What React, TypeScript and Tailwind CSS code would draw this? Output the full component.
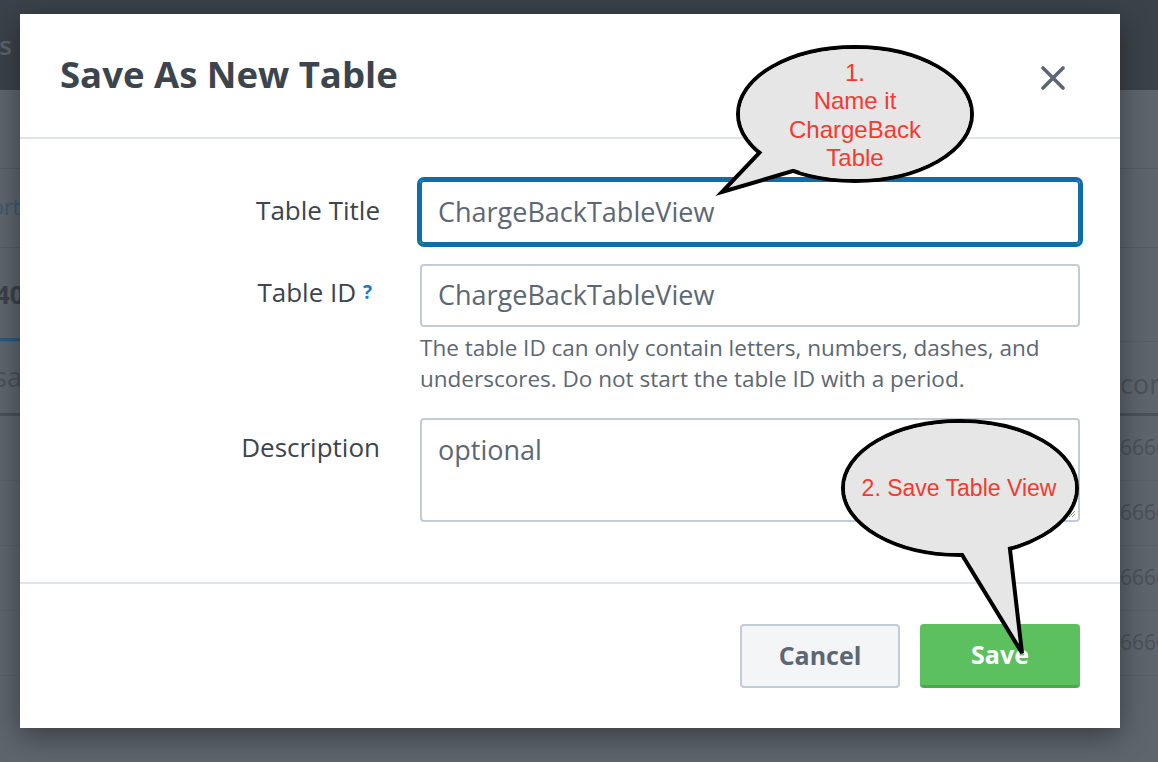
import React from 'react';

const ui = { fontFamily: '"Open Sans", Lato, sans-serif' };
const note = { fontFamily: '"Liberation Sans", Arial, sans-serif' };

const BgRow: React.FC<{ h: string; border: string; left?: React.ReactNode; right?: React.ReactNode }> = ({ h, border, left, right }) => (
  <div className={`flex items-center ${h} ${border}`}>
    <div className="w-[20px] overflow-hidden flex justify-end whitespace-nowrap">{left}</div>
    <div className="flex-1" />
    <div className="w-[38px] overflow-hidden whitespace-nowrap">{right}</div>
  </div>
);

const Bubbles: React.FC = () => (
  <svg className="absolute inset-0 pointer-events-none" width="1158" height="762" viewBox="0 0 1158 762">
    {/* bubble 1 */}
    <ellipse cx="855" cy="114" rx="117" ry="67" fill="#e6e6e6" stroke="#000" strokeWidth="4" />
    <polygon points="780,131 722,192 830,160" fill="#e6e6e6" stroke="#000" strokeWidth="4" strokeLinejoin="miter" />
    <ellipse cx="855" cy="114" rx="115" ry="65" fill="#e6e6e6" />
    <g fill="#f23b30" fontSize="24" textAnchor="middle" style={note}>
      <text x="855" y="81">1.</text>
      <text x="855" y="109">Name it</text>
      <text x="855" y="138">ChargeBack</text>
      <text x="855" y="166">Table</text>
    </g>
    {/* bubble 2 */}
    <ellipse cx="960" cy="488" rx="117" ry="67" fill="#e6e6e6" stroke="#000" strokeWidth="4" />
    <polygon points="945,527 1022,653 1006,515" fill="#e6e6e6" stroke="#000" strokeWidth="4" strokeLinejoin="miter" />
    <ellipse cx="960" cy="488" rx="115" ry="65" fill="#e6e6e6" />
    <text x="959" y="496" fill="#f23b30" fontSize="23" textAnchor="middle" style={note}>
      2. Save Table View
    </text>
  </svg>
);

export default function App() {
  return (
    <div className="relative w-[1158px] h-[762px] overflow-hidden bg-[#5e656d]" style={ui}>
      {/* page behind the dialog */}
      <div className="flex flex-col">
        <div className="h-[90px] bg-[#3b4249] flex items-center">
          <div className="w-[20px] overflow-hidden flex justify-end">
            <span className="text-[26px] font-semibold text-[#5b636c] pr-[8px]">Datasets</span>
          </div>
        </div>
        <BgRow h="h-[79px]" border="border-b border-[#545b63]" />
        <BgRow
          h="h-[79px]"
          border="border-b border-[#545b63]"
          left={<span className="text-[21px] text-[#3c5870]">Export</span>}
        />
        <div className="relative h-[94px] flex items-center border-b border-[#575e66]">
          <div className="w-[20px] overflow-hidden flex justify-end">
            <span className="text-[25px] font-bold text-[#3b4148] -mr-[4px]">140</span>
          </div>
          <div className="absolute left-0 bottom-0 w-[20px] h-[3px] bg-[#2f5877]" />
        </div>
        <BgRow
          h="h-[74px]"
          border="border-b-[3px] border-[#4b5158]"
          left={<span className="text-[27px] text-[#4a5159] -mr-[2px]">Usa</span>}
          right={<span className="text-[27px] text-[#4a5159] pt-[14px] inline-block">contents</span>}
        />
        {[0, 1, 2, 3].map((i) => (
          <BgRow
            key={i}
            h="h-[65px]"
            border="border-b border-[#586068]"
            right={<span className="text-[21px] text-[#4a5159]">66666</span>}
          />
        ))}
      </div>

      {/* dialog */}
      <div className="absolute left-[20px] top-[14px] w-[1100px] bg-white shadow-[0_8px_28px_rgba(0,0,0,0.4)]">
        <div className="h-[125px] flex items-center justify-between pl-[40px] pr-[55px] border-b-2 border-[#e1e5e8]">
          <h1 className="text-[36.5px] font-bold text-[#3c444d] -mt-[2px]">Save As New Table</h1>
          <svg width="24" height="24" viewBox="0 0 24 24" className="mt-[4px]">
            <path d="M2 2L22 22M22 2L2 22" stroke="#5c6773" strokeWidth="3.6" strokeLinecap="round" />
          </svg>
        </div>

        <div className="pt-[41px] pb-[60px] pr-[40px] flex flex-col gap-[20px]">
          <div className="grid grid-cols-[360px_660px] gap-x-[40px] items-center">
            <label className="text-right text-[26px] text-[#3c444d] -mt-[4px]">Table Title</label>
            <div className="h-[64px] rounded-[4px] border-2 border-[#106ea9] shadow-[0_0_0_3px_#0f6ca6] flex items-center px-[16px] text-[27px] text-[#5c6773]">
              ChargeBackTableView
            </div>
          </div>

          <div className="grid grid-cols-[360px_660px] gap-x-[40px]">
            <label className="text-right text-[26px] text-[#3c444d] pt-[9px] pr-[8px]">
              Table ID <sup className="text-[19px] font-bold text-[#1a7abf] relative -top-[3px]">?</sup>
            </label>
            <div className="flex flex-col">
              <div className="h-[63px] rounded-[4px] border-2 border-[#c3cbd4] flex items-center px-[16px] text-[27px] text-[#5c6773]">
                ChargeBackTableView
              </div>
              <p className="mt-[5px] text-[22.5px] leading-[31px] text-[#5c6773]">
                The table ID can only contain letters, numbers, dashes, and underscores. Do not start the table ID with a period.
              </p>
            </div>
          </div>

          <div className="grid grid-cols-[360px_660px] gap-x-[40px] mt-[4px]">
            <label className="text-right text-[26px] text-[#3c444d] pt-[10px]">Description</label>
            <div className="h-[104px] rounded-[4px] border-2 border-[#c3cbd4] px-[16px] pt-[10px] text-[27px] text-[#5c6773] relative">
              optional
              <svg className="absolute right-[2px] bottom-[2px]" width="10" height="10" viewBox="0 0 10 10">
                <path d="M9 3L3 9M9 6L6 9" stroke="#888" strokeWidth="1" />
              </svg>
            </div>
          </div>
        </div>

        <div className="border-t-2 border-[#e1e5e8] flex justify-end gap-[20px] pt-[40px] pb-[40px] pr-[40px]">
          <button className="w-[160px] h-[64px] rounded-[4px] bg-[#f4f5f6] border-2 border-[#c3cbd4] text-[25px] font-bold text-[#5c6773]">
            Cancel
          </button>
          <button className="w-[160px] h-[64px] rounded-[4px] bg-[#5cc05f] border-b-[3px] border-[#4aa94d] text-[25px] font-bold text-white">
            Save
          </button>
        </div>
      </div>

      <Bubbles />
    </div>
  );
}
